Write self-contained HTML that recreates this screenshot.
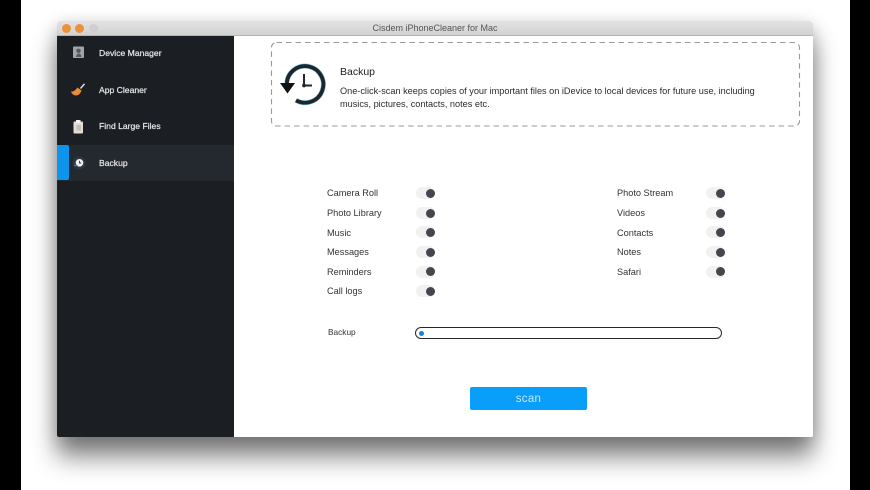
<!DOCTYPE html>
<html><head><meta charset="utf-8">
<style>
html,body{margin:0;padding:0;width:870px;height:490px;overflow:hidden;background:#000;}
*{box-sizing:border-box;}
body{font-family:"Liberation Sans",Arial,sans-serif;position:relative;}
.abs{position:absolute;}
#bg{position:absolute;left:21px;top:0;width:829px;height:490px;background:#fff;overflow:hidden;}
#win{position:absolute;left:36px;top:21px;width:756px;height:416px;border-radius:4px 4px 2px 2px;background:#fff;box-shadow:0 20px 25px rgba(0,0,0,.48),0 4px 18px rgba(0,0,0,.2);}
#inner{position:absolute;left:0;top:0;width:756px;height:416px;border-radius:4px 4px 2px 2px;overflow:hidden;filter:blur(.35px);background:#fff;}
#title{position:absolute;left:0;top:0;width:756px;height:15px;background:linear-gradient(#e3e3e3,#d1d1d1);border-bottom:1px solid #b5b5b5;text-align:center;font-size:9px;line-height:15px;color:#555;}
.dot{position:absolute;top:3px;width:9px;height:9px;border-radius:50%;}
#side{position:absolute;left:0;top:15px;width:177px;height:401px;background:#1b1e23;}
.nav{position:absolute;left:42px;color:#e8e8e8;font-size:8.6px;line-height:12px;-webkit-text-stroke:.2px #e8e8e8;}
.t{position:absolute;font-size:9.2px;line-height:12px;color:#333;}
.sw{position:absolute;width:19px;height:12px;border-radius:6px;background:#f1f1f1;}
.sw i{position:absolute;right:.5px;top:1.5px;width:9px;height:9px;border-radius:50%;background:#43464e;}
</style></head>
<body>
<div id="bg">
<div id="win"><div id="inner">
  <div id="title">Cisdem iPhoneCleaner for Mac</div>
  <div class="dot" style="left:5px;background:#ee8f3a"></div>
  <div class="dot" style="left:18px;background:#ee8f3a"></div>
  <div class="dot" style="left:32px;background:#cfcfcf"></div>
  <div id="side">
    <div class="abs" style="left:0;top:109px;width:177px;height:36px;background:#24282f"></div>
    <div class="abs" style="left:0;top:109px;width:12px;height:35px;background:#0d95ee;border-radius:0 2px 2px 0"></div>

    <svg class="abs" style="left:15px;top:9px" width="14" height="14" viewBox="0 0 14 14"><rect x="1" y="1.500" width="11" height="11.500" rx="1" fill="#a2a5a8"/><circle cx="6.500" cy="5.800" r="2.200" fill="#55585c"/><path d="M4 12c.5-2.500 1.500-3.500 2.800-3.500S9 9.500 9.500 12z" fill="#55585c"/></svg>
    <div class="nav" style="top:11px">Device Manager</div>

    <svg class="abs" style="left:13px;top:47px" width="16" height="14" viewBox="0 0 16 14"><path d="M10.500 5.500L14.500 .8" stroke="#ddd" stroke-width="1.500" fill="none"/><path d="M7.500 4.500L11.500 7.500C10.500 10.500 8.500 12.500 6 12.500 3.500 12.500 1.500 10.500 1 8.500 3.500 9 5.500 7 7.500 4.500z" fill="#ec8a35"/></svg>
    <div class="nav" style="top:48px">App Cleaner</div>

    <svg class="abs" style="left:15px;top:83px" width="14" height="15" viewBox="0 0 14 15"><rect x="1.500" y="2.500" width="9.500" height="12" rx="1" fill="#e2ddd2"/><rect x="4" y="1" width="4.500" height="3" fill="#f2f2f2"/><rect x="4.500" y="6" width="4.500" height="5.500" fill="#c4bfb3"/></svg>
    <div class="nav" style="top:84px">Find Large Files</div>

    <svg class="abs" style="left:13px;top:118px" width="18" height="18" viewBox="0 0 18 18"><circle cx="9" cy="9" r="6.500" fill="#2d3744"/><circle cx="9.500" cy="8.800" r="3.800" fill="#f2f2f2"/><path d="M9.500 6.800V9H11.300" stroke="#2d3744" stroke-width=".9" fill="none"/><path d="M4 11.500H7.500" stroke="#1c86d0" stroke-width="1.200"/></svg>
    <div class="nav" style="top:121px">Backup</div>
  </div>

  <svg class="abs" style="left:213px;top:20px" width="531" height="87" viewBox="0 0 531 87"><rect x="1.500" y="1.500" width="528" height="83.500" rx="5" fill="none" stroke="#999" stroke-width="1.100" stroke-dasharray="5.500 4"/></svg>

  <svg class="abs" style="left:222px;top:40px" width="48" height="46" viewBox="0 0 48 46">
    <path d="M7.800 22A18.300 18.300 0 1 1 17 39.300" fill="none" stroke="#7fd0ee" stroke-width="5"/>
    <path d="M7.800 22A18.300 18.300 0 1 1 17 39.300" fill="none" stroke="#222427" stroke-width="3.800"/>
    <path d="M1 22H16L8.500 32.500z" fill="#111"/>
    <path d="M25 13V24.500H33" fill="none" stroke="#26282b" stroke-width="2"/>
    <circle cx="25" cy="24.500" r="1.900" fill="#26282b"/>
  </svg>

  <div class="abs" style="left:283px;top:45px;font-size:10.500px;line-height:13px;color:#222">Backup</div>
  <div class="abs" style="left:283px;top:64px;width:440px;font-size:9.170px;line-height:13px;color:#2b2b2b;white-space:nowrap">One-click-scan keeps copies of your important files on iDevice to local devices for future use, including<br>musics, pictures, contacts, notes etc.</div>

  <div class="t" style="left:270px;top:166px">Camera Roll</div><div class="sw" style="left:359px;top:166px"><i></i></div>
  <div class="t" style="left:270px;top:186px">Photo Library</div><div class="sw" style="left:359px;top:186px"><i></i></div>
  <div class="t" style="left:270px;top:205.500px">Music</div><div class="sw" style="left:359px;top:205px"><i></i></div>
  <div class="t" style="left:270px;top:225px">Messages</div><div class="sw" style="left:359px;top:225px"><i></i></div>
  <div class="t" style="left:270px;top:244.500px">Reminders</div><div class="sw" style="left:359px;top:244.500px"><i></i></div>
  <div class="t" style="left:270px;top:264px">Call logs</div><div class="sw" style="left:359px;top:264px"><i></i></div>

  <div class="t" style="left:560px;top:166px">Photo Stream</div><div class="sw" style="left:649px;top:166px"><i></i></div>
  <div class="t" style="left:560px;top:186px">Videos</div><div class="sw" style="left:649px;top:186px"><i></i></div>
  <div class="t" style="left:560px;top:205.500px">Contacts</div><div class="sw" style="left:649px;top:205px"><i></i></div>
  <div class="t" style="left:560px;top:225px">Notes</div><div class="sw" style="left:649px;top:225px"><i></i></div>
  <div class="t" style="left:560px;top:244.500px">Safari</div><div class="sw" style="left:649px;top:244.500px"><i></i></div>

  <div class="t" style="left:271px;top:305px;font-size:8.300px;color:#333">Backup</div>
  <div class="abs" style="left:358px;top:306px;width:307px;height:12px;border:1.800px solid #26282c;border-radius:6px;background:#fff"></div>
  <div class="abs" style="left:362px;top:309.500px;width:5px;height:5px;border-radius:50%;background:#1185dc"></div>

  <div class="abs" style="left:413px;top:366px;width:117px;height:23px;background:#0a9efb;border-radius:2px;color:#c4e6fb;text-align:center;font-size:11.500px;line-height:25px;letter-spacing:.3px">scan</div>
</div></div>
</div>
</body></html>
